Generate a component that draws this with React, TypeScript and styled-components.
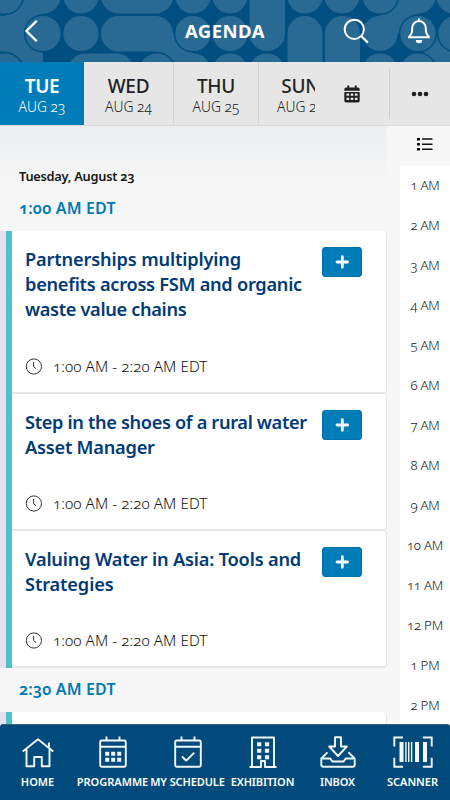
import React from "react";
import styled, { createGlobalStyle } from "styled-components";

const Global = createGlobalStyle`
  * { box-sizing: border-box; }
  body {
    margin: 0;
    background: #f7f7f7;
    font-family: "Noto Sans", "Open Sans", sans-serif;
    font-variant-numeric: oldstyle-nums;
  }
`;

const Screen = styled.div`
  display: flex;
  flex-direction: column;
  width: 450px;
  height: 800px;
  overflow: hidden;
  background: #f7f7f7;
`;

const Header = styled.header`
  position: relative;
  flex: none;
  height: 62px;
  display: grid;
  grid-template-columns: 110px 1fr 110px;
  background: #004f80;
`;

const Backdrop = styled.svg`
  position: absolute;
  inset: 0;
`;

const HeaderSide = styled.div`
  position: relative;
  svg { display: block; }
`;

const Title = styled.h1`
  position: relative;
  margin: 0;
  text-align: center;
  color: #fff;
  font-size: 18.5px;
  font-weight: 700;
  line-height: 62px;
  letter-spacing: 0.5px;
`;

const DayBar = styled.nav`
  flex: none;
  display: flex;
  height: 64px;
  background: #e6e6e6;
  border-bottom: 1px solid #d9dadb;
`;

const DayList = styled.div`
  display: flex;
  width: 315px;
  overflow: hidden;
`;

const Day = styled.div<{ $width: number; $active?: boolean }>`
  flex: none;
  width: ${(p) => p.$width}px;
  padding-top: 13px;
  text-align: center;
  background: ${(p) => (p.$active ? "#007cb8" : "#e6e6e6")};
  color: ${(p) => (p.$active ? "#fff" : "#222")};
  border-right: ${(p) => (p.$active ? "0" : "1px solid #d2d2d2")};
  white-space: nowrap;
`;

const DayName = styled.div<{ $bold?: boolean }>`
  font-size: 19px;
  font-weight: ${(p) => (p.$bold ? 600 : 500)};
  line-height: 23px;
  letter-spacing: -0.3px;
`;

const DayDate = styled.div`
  font-size: 13.8px;
  font-weight: 300;
  line-height: 18px;
`;

const BarButton = styled.div<{ $width: number; $divider?: boolean }>`
  display: flex;
  align-items: center;
  justify-content: center;
  width: ${(p) => p.$width}px;
  height: 50px;
  margin-top: 7px;
  border-right: ${(p) => (p.$divider ? "1px solid #cbcbcb" : "0")};
`;

const Body = styled.div`
  flex: 1;
  min-height: 0;
  display: flex;
  overflow: hidden;
`;

const Sessions = styled.main`
  width: 387px;
  background: linear-gradient(#eceef0, #f7f7f7 60px);
`;

const DateHeading = styled.h2`
  margin: 0;
  padding: 39px 0 0 19px;
  height: 61px;
  font-size: 12.8px;
  font-weight: 600;
  line-height: 22px;
  letter-spacing: -0.25px;
  color: #161616;
`;

const TimeHeading = styled.h3`
  margin: 0;
  height: 44px;
  padding: 10px 0 0 19px;
  font-size: 16px;
  font-weight: 600;
  line-height: 22px;
  letter-spacing: 0.17px;
  color: #0079b8;
`;

const Group = styled.section`
  border-left: 6px solid #e6e0f0;
`;

const Stripe = styled.div`
  border-left: 6.5px solid #4bc2cc;
  display: flex;
  flex-direction: column;
`;

const Card = styled.article<{ $height: number }>`
  display: flex;
  flex-direction: column;
  justify-content: space-between;
  height: ${(p) => p.$height}px;
  padding: 16px 24px 16px 13px;
  background: #fff;
  border-right: 1px solid #e5e5e5;
  border-bottom: 2px solid #e6e6e6;
  border-radius: 0 4px 4px 0;
`;

const CardTop = styled.div`
  display: flex;
  justify-content: space-between;
  align-items: flex-start;
`;

const CardTitle = styled.h4`
  margin: 0;
  font-size: 18.2px;
  font-weight: 600;
  line-height: 25px;
  color: #003a78;
  white-space: nowrap;
`;

const TitleLine = styled.div<{ $spacing: number }>`
  letter-spacing: ${(p) => p.$spacing}px;
`;

const AddButton = styled.button`
  flex: none;
  display: flex;
  align-items: center;
  justify-content: center;
  width: 40px;
  height: 30px;
  padding: 0;
  border: 1px solid #0072ae;
  border-radius: 3px;
  background: #007cb8;
`;

const CardTime = styled.div`
  display: flex;
  align-items: center;
  gap: 11px;
  height: 20px;
  font-size: 15.2px;
  font-weight: 300;
  letter-spacing: 0.08px;
  color: #111;
`;

const Rail = styled.aside`
  width: 63px;
  margin-top: -1px;
  background: #f7f7f7;
`;

const RailToggle = styled.div`
  display: flex;
  height: 41px;
  padding: 12px 0 0 30px;
`;

const Hours = styled.div`
  margin-left: 13px;
  background: #fff;
`;

const Hour = styled.div`
  height: 40px;
  text-align: center;
  font-size: 13.2px;
  font-weight: 350;
  line-height: 39px;
  letter-spacing: -0.2px;
  color: #151515;
`;

const TabBar = styled.footer`
  flex: none;
  display: grid;
  grid-template-columns: repeat(6, 75px);
  height: 76px;
  background: #004b7c;
  border-top: 1px solid #35607c;
  border-radius: 3px 3px 0 0;
`;

const Tab = styled.div`
  display: flex;
  flex-direction: column;
  align-items: center;
  padding-top: 10px;
  color: #fff;
  font-size: 11px;
  font-weight: 600;
  line-height: 16px;
  white-space: nowrap;
`;

const TabIcon = styled.svg`
  flex: none;
  display: block;
  width: 40px;
  height: 34px;
  margin-bottom: 5px;
  fill: none;
  stroke: #f4f7fb;
  stroke-width: 1.9;
  stroke-linejoin: round;
`;

const TabLabel = styled.span<{ $spacing: number }>`
  letter-spacing: ${(p) => p.$spacing}px;
`;

const LIGHT = "#286a94";
const DARK = "#004f80";

function Pattern() {
  const dots: [number, number][] = [
    [81, -4], [193, -4], [230, -4], [305, -4], [342, -4], [454, -4],
    [81, 33.5], [230, 33.5], [380, 33.5], [5, 33.5],
    [230, 71], [267, 71], [380, 71], [193, 71], [43, -4], [418, -4], [456, 71],
  ];
  const rings: [number, number][] = [
    [5, -4], [43, 33.5], [5, 71], [157, 71], [193, 33.5],
    [380, -4], [418, 33.5], [418, 71], [456, 33.5],
  ];
  return (
    <Backdrop width="450" height="62" viewBox="0 0 450 62">
      <g fill={LIGHT}>
        <rect x="101" y="-22" width="72" height="35.5" rx="17.5" />
        <rect x="101" y="16" width="72" height="35.5" rx="17.5" />
        <rect x="68" y="53.5" width="66" height="35" rx="17.5" />
        <rect x="249.500" y="-30" width="35.5" height="81" rx="17.5" />
        <rect x="287.500" y="16" width="35" height="80" rx="17.5" />
        <rect x="325" y="16" width="35" height="80" rx="17.5" />
        <rect x="5" y="-4" width="38" height="75" />
        <rect x="-20" y="16" width="26" height="35.500" />
        <rect x="43" y="-22" width="18" height="18" />
        <rect x="157" y="33.5" width="36" height="37.5" />
        <rect x="380" y="-4" width="38" height="37.5" />
        <rect x="418" y="33.5" width="38" height="37.5" />
        {dots.map(([x, y]) => (
          <circle key={`${x},${y}`} cx={x} cy={y} r="17.6" />
        ))}
      </g>
      <g fill={LIGHT} stroke={DARK} strokeWidth="1.6">
        {rings.map(([x, y]) => (
          <circle key={`${x},${y}`} cx={x} cy={y} r="18.4" />
        ))}
      </g>
    </Backdrop>
  );
}

const ClockIcon = () => (
  <svg width="17" height="17" viewBox="0 0 17 17" fill="none" stroke="#333" strokeWidth="1">
    <circle cx="8.900" cy="8.500" r="7.600" />
    <path d="M8.600 3.800v4.900l2.500 2" />
  </svg>
);

const PlusIcon = () => (
  <svg width="14" height="14" viewBox="0 0 14 14" stroke="#fff" strokeWidth="2.800" strokeLinecap="round">
    <path d="M7.300 1.700v10.600M2 7h10.600" />
  </svg>
);

type Session = { title: [string, number][]; height: number };

function SessionCard({ title, height }: Session) {
  return (
    <Card $height={height}>
      <CardTop>
        <CardTitle>
          {title.map(([line, spacing]) => (
            <TitleLine key={line} $spacing={spacing}>{line}</TitleLine>
          ))}
        </CardTitle>
        <AddButton aria-label="Add">
          <PlusIcon />
        </AddButton>
      </CardTop>
      <CardTime>
        <ClockIcon />
        1:00 AM - 2:20 AM EDT
      </CardTime>
    </Card>
  );
}

const sessions: Session[] = [
  {
    title: [
      ["Partnerships multiplying", -0.14],
      ["benefits across FSM and organic", -0.26],
      ["waste value chains", -0.33],
    ],
    height: 163,
  },
  { title: [["Step in the shoes of a rural water", -0.34], ["Asset Manager", -0.22]], height: 137 },
  { title: [["Valuing Water in Asia: Tools and", -0.18], ["Strategies", -0.12]], height: 137 },
];

const hours = [
  "1 AM", "2 AM", "3 AM", "4 AM", "5 AM", "6 AM", "7 AM",
  "8 AM", "9 AM", "10 AM", "11 AM", "12 PM", "1 PM", "2 PM",
];

const tabs: { label: string; spacing: number; icon: React.ReactNode }[] = [
  {
    label: "HOME",
    spacing: 0,
    icon: (
      <path d="M4.700 16.500L20 4.300l15.300 12.200M8.500 14v17.300h7.700V22h7.600v9.300h7.700V14M31 12.500V7.500" />
    ),
  },
  {
    label: "PROGRAMME",
    spacing: 0,
    icon: (
      <>
        <rect x="7.200" y="5.500" width="25.600" height="26.300" rx="1.500" />
        <path d="M7.200 11.800h25.600M13.500 1.500v4M26.500 1.500v4" />
        <path d="M12.200 18.800h16M12.200 24.800h16" strokeWidth="4" strokeDasharray="4 2" />
      </>
    ),
  },
  {
    label: "MY SCHEDULE",
    spacing: -0.1,
    icon: (
      <>
        <rect x="7.200" y="5.500" width="25.600" height="26.300" rx="1.500" />
        <path d="M7.200 11.800h25.600M13.500 1.500v4M26.500 1.500v4M14 21.500l4.300 4.200 8-8" />
      </>
    ),
  },
  {
    label: "EXHIBITION",
    spacing: -0.1,
    icon: (
      <>
        <path d="M9 32V2.500h22V32M6.500 32H18v-6h4v6h11.500" />
        <path d="M16.200 7.300v17M24 7.300v17" strokeWidth="4.200" strokeDasharray="4 2.500" />
      </>
    ),
  },
  {
    label: "INBOX",
    spacing: -0.1,
    icon: (
      <path d="M17 2.300h6v9.200h5.800L20 21l-8.800-9.500H17zM9.500 17.300L3.300 23.500v6.200q0 2 2 2h29.400q2 0 2-2v-6.200l-6.200-6.200M3.300 23.500h9l2 3h11.400l2-3h9" />
    ),
  },
  {
    label: "SCANNER",
    spacing: 0,
    icon: (
      <>
        <path d="M10 2.500H1.300v9M30 2.500h8.700v9M10 31.800H1.300v-9M30 31.800h8.700v-9" strokeLinejoin="miter" />
        <path d="M8.500 7v20M24 7v20M32 7v20" strokeWidth="4" />
        <path d="M12.900 7v20M15.700 7v20M18.600 7v20" strokeWidth="1.400" />
      </>
    ),
  },
];

export default function App() {
  return (
    <Screen>
      <Global />
      <Header>
        <Pattern />
        <HeaderSide>
          <svg width="110" height="62" fill="none" stroke="#fff" strokeWidth="2.300">
            <path d="M36.800 20.800L26.400 31l10.400 10.200" />
          </svg>
        </HeaderSide>
        <Title>AGENDA</Title>
        <HeaderSide>
          <svg width="110" height="62" fill="none" stroke="#fff" strokeWidth="2">
            <circle cx="14.300" cy="29.300" r="9.600" />
            <path d="M21 36l6.800 6.500" strokeWidth="2.400" />
            <path d="M68.800 37.300h20.400c-2-2.300-3.300-3.600-3.300-6v-2.800c0-4-2.700-7.400-6.900-7.400s-6.900 3.400-6.900 7.400v2.800c0 2.400-1.300 3.700-3.300 6zM79 21v-2.500" strokeLinejoin="round" />
            <path d="M75.800 40h6.400a3.200 3.200 0 0 1-6.400 0z" fill="#fff" stroke="none" />
          </svg>
        </HeaderSide>
      </Header>
      <DayBar>
        <DayList>
          <Day $width={84} $active>
            <DayName $bold>TUE</DayName>
            <DayDate>AUG 23</DayDate>
          </Day>
          <Day $width={90}>
            <DayName>WED</DayName>
            <DayDate>AUG 24</DayDate>
          </Day>
          <Day $width={85}>
            <DayName>THU</DayName>
            <DayDate>AUG 25</DayDate>
          </Day>
          <Day $width={84}>
            <DayName>SUN</DayName>
            <DayDate>AUG 28</DayDate>
          </Day>
        </DayList>
        <BarButton $width={75} $divider>
          <svg width="16" height="18" viewBox="0 0 16 18">
            <path fill="#222" fillRule="evenodd" d="M3.300 0.500h2v2h5.400v-2h2v2h1.300q1.700 0 1.700 1.700V5.800H.3V4.200q0-1.700 1.700-1.700h1.300zM.3 6.900h15.400v8.800q0 1.700-1.700 1.700H2q-1.700 0-1.700-1.700zM2.500 8.500v2.300h2.600V8.500zm4.200 0v2.300h2.600V8.500zm4.200 0v2.300h2.600V8.500zM2.500 12.700V15h2.600v-2.300zm4.200 0V15h2.600v-2.300zm4.200 0V15h2.600v-2.300z" />
          </svg>
        </BarButton>
        <BarButton $width={60}>
          <svg width="18" height="6" fill="#222">
            <circle cx="3" cy="3" r="2.300" />
            <circle cx="9" cy="3" r="2.300" />
            <circle cx="15" cy="3" r="2.300" />
          </svg>
        </BarButton>
      </DayBar>
      <Body>
        <Sessions>
          <DateHeading>Tuesday, August 23</DateHeading>
          <TimeHeading>1:00 AM EDT</TimeHeading>
          <Group>
            <Stripe>
              {sessions.map((s) => (
                <SessionCard key={s.title[0][0]} {...s} />
              ))}
            </Stripe>
          </Group>
          <TimeHeading>2:30 AM EDT</TimeHeading>
          <Group>
            <Stripe>
              <Card $height={100} />
            </Stripe>
          </Group>
        </Sessions>
        <Rail>
          <RailToggle>
            <svg width="16" height="14" fill="#111">
              <path d="M0 1h3v2.500H0zM0 6h3v2.500H0zM0 11h3v2.500H0zM5 1.300h10.500v1.500H5zM5 6.400h10.500v1.500H5zM5 11.500h10.500V13H5z" />
            </svg>
          </RailToggle>
          <Hours>
            {hours.map((h) => (
              <Hour key={h}>{h}</Hour>
            ))}
          </Hours>
        </Rail>
      </Body>
      <TabBar>
        {tabs.map((t) => (
          <Tab key={t.label}>
            <TabIcon viewBox="0 0 40 34">{t.icon}</TabIcon>
            <TabLabel $spacing={t.spacing}>{t.label}</TabLabel>
          </Tab>
        ))}
      </TabBar>
    </Screen>
  );
}
